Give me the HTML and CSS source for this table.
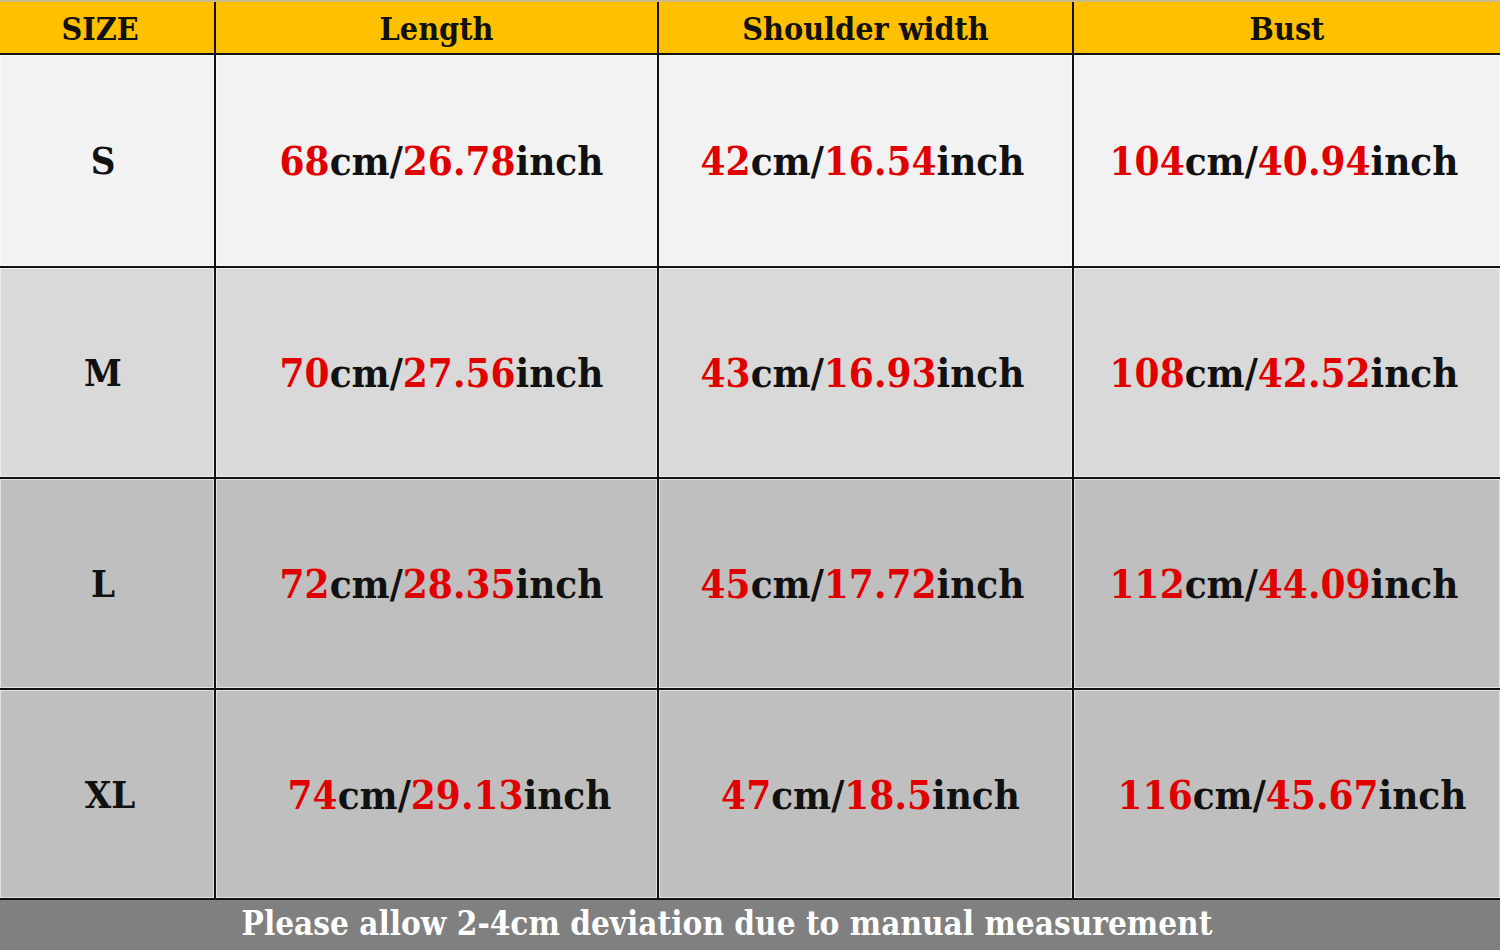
FILE: index.html
```html
<!DOCTYPE html>
<html>
<head>
<meta charset="utf-8">
<link rel="stylesheet" href="styles.css">
</head>
<body>
<div class="topline"></div>
<div class="chart">
  <div class="cell head head-size">SIZE</div>
  <div class="cell head">Length</div>
  <div class="cell head">Shoulder width</div>
  <div class="cell head">Bust</div>

  <div class="cell r1 size">S</div>
  <div class="cell r1 val c-len"><span class="n">68</span>cm/<span class="n">26.78</span>inch</div>
  <div class="cell r1 val c-oth"><span class="n">42</span>cm/<span class="n">16.54</span>inch</div>
  <div class="cell r1 val c-oth"><span class="n">104</span>cm/<span class="n">40.94</span>inch</div>

  <div class="cell r2 size">M</div>
  <div class="cell r2 val c-len"><span class="n">70</span>cm/<span class="n">27.56</span>inch</div>
  <div class="cell r2 val c-oth"><span class="n">43</span>cm/<span class="n">16.93</span>inch</div>
  <div class="cell r2 val c-oth"><span class="n">108</span>cm/<span class="n">42.52</span>inch</div>

  <div class="cell r3 size">L</div>
  <div class="cell r3 val c-len"><span class="n">72</span>cm/<span class="n">28.35</span>inch</div>
  <div class="cell r3 val c-oth"><span class="n">45</span>cm/<span class="n">17.72</span>inch</div>
  <div class="cell r3 val c-oth"><span class="n">112</span>cm/<span class="n">44.09</span>inch</div>

  <div class="cell r4 size shift-s">XL</div>
  <div class="cell r4 val shift-l"><span class="n">74</span>cm/<span class="n">29.13</span>inch</div>
  <div class="cell r4 val shift-m"><span class="n">47</span>cm/<span class="n">18.5</span>inch</div>
  <div class="cell r4 val shift-m"><span class="n">116</span>cm/<span class="n">45.67</span>inch</div>

  <div class="foot">Please allow 2-4cm deviation due to manual measurement</div>
</div>
</body>
</html>
```
FILE: styles.css
```css
html, body {
  margin: 0;
  padding: 0;
  width: 1500px;
  height: 950px;
  overflow: hidden;
}
body {
  font-family: "DejaVu Serif", "Liberation Serif", serif;
  font-weight: bold;
  background: #808080;
}
.topline {
  height: 2px;
  background: #c9b98d;
}
.chart {
  display: grid;
  grid-template-columns: 214px 441px 413px 426px;
  grid-template-rows: 51px 211px 209px 209px 208px 50px;
  gap: 2px;
  background: #111;
}
.cell {
  display: flex;
  align-items: center;
  justify-content: center;
  color: #111;
}
.head {
  background: #ffc000;
  font-size: 32px;
  font-stretch: condensed;
  padding-top: 2px;
}
.head-size {
  padding-right: 14px;
}
.r1, .r2, .r3, .r4 {
  box-shadow: inset 0 0 0 1px rgba(255, 255, 255, 0.55);
}
.r1 { background: #f2f2f2; }
.r2 { background: #d9d9d9; }
.r3 { background: #bfbfbf; }
.r4 { background: #bfbfbf; }
.size {
  font-size: 38px;
  font-stretch: condensed;
  padding-right: 8px;
}
.val {
  font-size: 40px;
  font-stretch: condensed;
}
.n { color: #e00000; }
.c-len { padding-left: 10px; }
.c-oth { padding-right: 6px; }
.shift-s { padding-right: 0; padding-left: 6px; }
.shift-l { padding-left: 26px; }
.shift-m { padding-left: 10px; }
.foot {
  grid-column: 1 / -1;
  background: #808080;
  color: #fff;
  font-size: 33px;
  font-stretch: condensed;
  display: flex;
  align-items: center;
  justify-content: center;
  padding-right: 46px;
  padding-bottom: 4px;
}
```
